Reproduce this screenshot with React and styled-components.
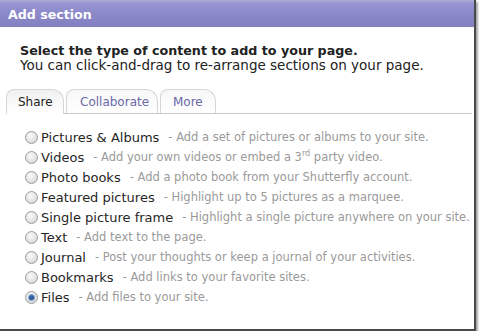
import React from "react";
import styled, { createGlobalStyle } from "styled-components";

const Global = createGlobalStyle`
    body {
        margin: 0;
        background: #ffffff;
        font-family: "DejaVu Sans", Verdana, sans-serif;
    }
`;

const Dialog = styled.div`
    width: 474px;
    height: 329px;
    background: #fff;
    border-right: 2px solid #4a4a4a;
    border-bottom: 2px solid #4a4a4a;
    box-shadow: 2px 2px 2px rgba(0, 0, 0, 0.35);
    display: flex;
    flex-direction: column;
`;

const TitleBar = styled.div`
    height: 25px;
    padding: 0 8px;
    display: flex;
    align-items: center;
    border-top: 2px solid #a9a7cf;
    background: linear-gradient(#9a97d6, #8c89c9 45%, #8380c2);
    color: #fff;
    font-weight: bold;
    font-size: 12.6px;
`;

const Intro = styled.div`
    padding: 16px 20px 0;
    color: #222;
    font-size: 13.5px;
    line-height: 15px;

    .lead {
        font-weight: bold;
        font-size: 12.7px;
    }
`;

const TabStrip = styled.div`
    margin: 15px 2px 0 6px;
    height: 25px;
    display: flex;
    align-items: flex-end;
    gap: 2px;
    border-bottom: 1px solid #c9c9c9;
`;

const Tab = styled.div`
    width: ${p => p.$w}px;
    box-sizing: border-box;
    display: flex;
    align-items: center;
    padding-left: ${p => p.$pad}px;
    font-size: 12px;
    color: ${p => (p.$active ? "#222" : "#6a68a8")};
    border: 1px solid #d6d6d6;
    border-bottom: none;
    border-radius: 8px 12px 0 0;
    background: ${p =>
        p.$active
            ? "linear-gradient(#f0f0f0, #fafafa 60%, #fff)"
            : "linear-gradient(#f7f7f7, #ffffff)"};
    margin-bottom: ${p => (p.$active ? "-1px" : "0")};
    height: ${p => (p.$active ? "25px" : "24px")};
`;

const List = styled.div`
    padding: 13px 0 0 25px;
    display: flex;
    flex-direction: column;
`;

const Row = styled.label`
    height: 20px;
    display: flex;
    align-items: center;
    white-space: nowrap;
`;

const Radio = styled.span`
    width: 11px;
    height: 11px;
    border-radius: 50%;
    border: 1px solid #9c9c9c;
    background: radial-gradient(circle at 40% 35%, #fbfbfb, #dcdcdc 70%, #cfcfcf);
    display: flex;
    align-items: center;
    justify-content: center;
    flex-shrink: 0;

    &::after {
        content: "";
        display: ${p => (p.$checked ? "block" : "none")};
        width: 5px;
        height: 5px;
        border-radius: 50%;
        background: radial-gradient(circle at 40% 35%, #3a6fb0, #1c3f73);
        box-shadow: 0 0 0 1px #7ea6d8;
    }
`;

const Name = styled.span`
    margin-left: 3px;
    font-size: 13px;
    color: #262626;
`;

const Desc = styled.span`
    margin-left: 9px;
    font-size: 11.5px;
    color: #9a9a9a;

    sup {
        font-size: 8px;
        line-height: 0;
    }
`;

const sections = [
    ["Pictures & Albums", "- Add a set of pictures or albums to your site."],
    ["Videos", <>- Add your own videos or embed a 3<sup>rd</sup> party video.</>],
    ["Photo books", "- Add a photo book from your Shutterfly account."],
    ["Featured pictures", "- Highlight up to 5 pictures as a marquee."],
    ["Single picture frame", "- Highlight a single picture anywhere on your site."],
    ["Text", "- Add text to the page."],
    ["Journal", "- Post your thoughts or keep a journal of your activities."],
    ["Bookmarks", "- Add links to your favorite sites."],
    ["Files", "- Add files to your site."],
];

export default function App() {
    return (
        <>
            <Global />
            <Dialog>
                <TitleBar>Add section</TitleBar>
                <Intro>
                    <div className="lead">Select the type of content to add to your page.</div>
                    <div>You can click-and-drag to re-arrange sections on your page.</div>
                </Intro>
                <TabStrip>
                    <Tab $active $w={58} $pad={11}>Share</Tab>
                    <Tab $w={92} $pad={13}>Collaborate</Tab>
                    <Tab $w={56} $pad={12}>More</Tab>
                </TabStrip>
                <List>
                    {sections.map(([name, desc]) => (
                        <Row key={name}>
                            <Radio $checked={name === "Files"} />
                            <Name>{name}</Name>
                            <Desc>{desc}</Desc>
                        </Row>
                    ))}
                </List>
            </Dialog>
        </>
    );
}
